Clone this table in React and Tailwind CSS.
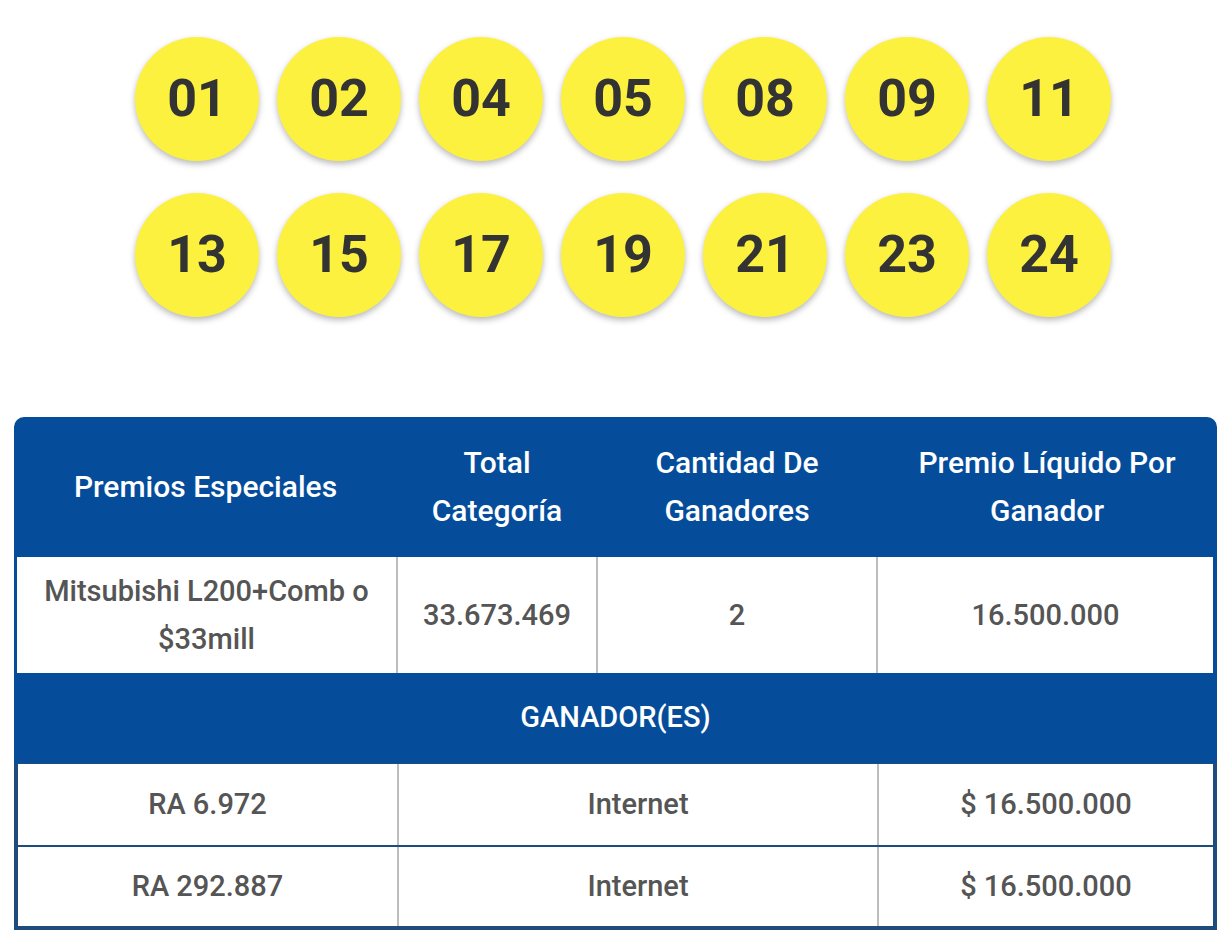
import React from 'react';

const balls = [
  ['01', '02', '04', '05', '08', '09', '11'],
  ['13', '15', '17', '19', '21', '23', '24'],
];

const winners = [
  { id: 'RA 6.972', channel: 'Internet', prize: '$ 16.500.000' },
  { id: 'RA 292.887', channel: 'Internet', prize: '$ 16.500.000' },
];

const App = () => {
  return (
    <div className="min-h-screen bg-white font-['Roboto',sans-serif]">
      <div className="flex flex-col items-center gap-[32px] pt-[37px] pl-[14px]">
        {balls.map((row, r) => (
          <div key={r} className="flex gap-[18px]">
            {row.map((n) => (
              <div
                key={n}
                className="w-[124px] h-[124px] rounded-full bg-[#fdf140] shadow-[0_3px_6px_rgba(0,0,0,0.28)] flex items-center justify-center text-[52px] font-bold text-[#333333] leading-none"
              >
                {n}
              </div>
            ))}
          </div>
        ))}
      </div>

      <div className="ml-[14px] mt-[100px] w-[1203px]">
        {/* header */}
        <div className="grid grid-cols-[383px_200px_280px_340px] h-[140px] rounded-t-[10px] bg-[#054d9b] text-white text-[30px] font-medium leading-[48px] text-center">
          <div className="flex items-center justify-center px-4">Premios Especiales</div>
          <div className="flex items-center justify-center px-4">Total<br />Categoría</div>
          <div className="flex items-center justify-center px-4">Cantidad De<br />Ganadores</div>
          <div className="flex items-center justify-center px-4">Premio Líquido Por<br />Ganador</div>
        </div>

        {/* prize row */}
        <div className="bg-[#054d9b] pl-[3px] pr-[4px]">
          <div className="grid grid-cols-[379px_198px_278px_335px] gap-x-[2px] bg-[#bdbdbd] h-[116px] text-[#555555] text-[29px] font-medium leading-[48px] text-center">
            <div className="bg-white flex items-center justify-center">Mitsubishi L200+Comb o<br />$33mill</div>
            <div className="bg-white flex items-center justify-center">33.673.469</div>
            <div className="bg-white flex items-center justify-center">2</div>
            <div className="bg-white flex items-center justify-center">16.500.000</div>
          </div>
        </div>

        <div className="h-[90px] bg-[#054d9b] flex items-center justify-center text-white text-[29px] font-medium">
          GANADOR(ES)
        </div>

        {/* winners */}
        <div className="border-x-4 border-b-4 border-t border-[#1e4c7c] bg-white">
          {winners.map((w, i) => (
            <div
              key={w.id}
              className={`grid grid-cols-[379px_478px_334px] gap-x-[2px] bg-[#bdbdbd] h-[81px] text-[#555555] text-[29px] font-medium text-center ${i > 0 ? 'border-t-2 border-[#1e4c7c]' : ''}`}
            >
              <div className="bg-white flex items-center justify-center">{w.id}</div>
              <div className="bg-white flex items-center justify-center">{w.channel}</div>
              <div className="bg-white flex items-center justify-center">{w.prize}</div>
            </div>
          ))}
        </div>
      </div>
    </div>
  );
};

export default App;
